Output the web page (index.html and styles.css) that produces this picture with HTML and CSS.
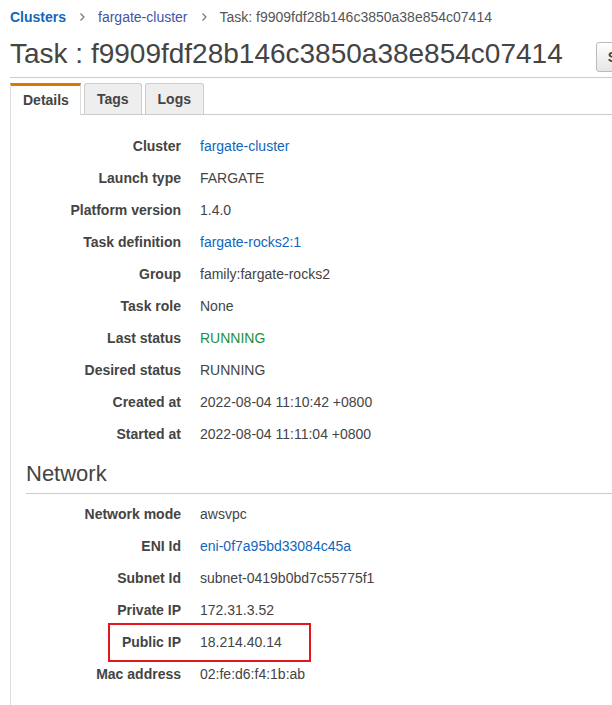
FILE: index.html
```html
<!DOCTYPE html>
<html lang="en">
<head>
<meta charset="utf-8">
<title>Task f9909fdf28b146c3850a38e854c07414</title>
<link rel="stylesheet" href="styles.css">
</head>
<body>
<div class="page">
  <nav class="breadcrumb">
    <a class="crumb crumb-root" href="#">Clusters</a>
    <svg class="sep" width="7" height="10" viewBox="0 0 7 10"><polyline points="1.5,1.5 5,5 1.5,8.5" fill="none" stroke="#777" stroke-width="1.2"/></svg>
    <a class="crumb crumb-link" href="#">fargate-cluster</a>
    <svg class="sep" width="7" height="10" viewBox="0 0 7 10"><polyline points="1.5,1.5 5,5 1.5,8.5" fill="none" stroke="#777" stroke-width="1.2"/></svg>
    <span class="crumb crumb-current">Task: f9909fdf28b146c3850a38e854c07414</span>
  </nav>

  <header class="title-bar">
    <h1 class="title">Task : f9909fdf28b146c3850a38e854c07414</h1>
    <button class="action-btn">Stop</button>
  </header>

  <div class="tabs">
    <div class="tab tab-active">Details</div>
    <div class="tab">Tags</div>
    <div class="tab">Logs</div>
  </div>

  <section class="panel">
    <dl class="props">
      <div class="row"><dt>Cluster</dt><dd><a href="#" class="link">fargate-cluster</a></dd></div>
      <div class="row"><dt>Launch type</dt><dd>FARGATE</dd></div>
      <div class="row"><dt>Platform version</dt><dd>1.4.0</dd></div>
      <div class="row"><dt>Task definition</dt><dd><a href="#" class="link">fargate-rocks2:1</a></dd></div>
      <div class="row"><dt>Group</dt><dd>family:fargate-rocks2</dd></div>
      <div class="row"><dt>Task role</dt><dd>None</dd></div>
      <div class="row"><dt>Last status</dt><dd class="status-running">RUNNING</dd></div>
      <div class="row"><dt>Desired status</dt><dd>RUNNING</dd></div>
      <div class="row"><dt>Created at</dt><dd>2022-08-04 11:10:42 +0800</dd></div>
      <div class="row"><dt>Started at</dt><dd>2022-08-04 11:11:04 +0800</dd></div>
    </dl>

    <h2 class="section-title">Network</h2>

    <dl class="props props-network">
      <div class="row"><dt>Network mode</dt><dd>awsvpc</dd></div>
      <div class="row"><dt>ENI Id</dt><dd><a href="#" class="link">eni-0f7a95bd33084c45a</a></dd></div>
      <div class="row"><dt>Subnet Id</dt><dd>subnet-0419b0bd7c55775f1</dd></div>
      <div class="row"><dt>Private IP</dt><dd>172.31.3.52</dd></div>
      <div class="row row-highlight"><dt>Public IP</dt><dd>18.214.40.14</dd><span class="highlight-box"></span></div>
      <div class="row"><dt>Mac address</dt><dd>02:fe:d6:f4:1b:ab</dd></div>
    </dl>
  </section>
</div>
</body>
</html>
```

FILE: styles.css
```css
html, body {
  margin: 0;
  padding: 0;
  overflow: hidden;
  background: #fff;
}

body {
  font-family: "Liberation Sans", Arial, sans-serif;
  font-size: 14px;
  color: #444;
}

.page {
  padding-left: 10px;
  min-height: 705px;
  display: flex;
  flex-direction: column;
}

/* breadcrumb */
.breadcrumb {
  display: flex;
  align-items: center;
  padding-top: 7px;
  height: 20px;
  line-height: 20px;
  white-space: nowrap;
}

.crumb {
  text-decoration: none;
}

.crumb-root {
  color: #1166bb;
  font-weight: bold;
}

.crumb-link {
  color: #3f54a8;
}

.crumb-current {
  color: #555;
}

.sep {
  margin: 0 12px 0 13px;
  display: block;
}

/* title */
.title-bar {
  display: flex;
  align-items: flex-start;
  margin-top: 10px;
  padding-bottom: 5px;
  border-bottom: 1px solid #ccc;
  white-space: nowrap;
}

.title {
  margin: 0;
  font-size: 28px;
  font-weight: normal;
  line-height: 34px;
  color: #444;
  flex-shrink: 0;
}

.action-btn {
  flex-shrink: 0;
  margin-left: 33px;
  margin-top: 5px;
  height: 30px;
  padding: 0 11px;
  border: 1px solid #bbb;
  border-radius: 3px;
  background: linear-gradient(#fefefe, #e6e6e6);
  font-family: "Liberation Sans", Arial, sans-serif;
  font-size: 14px;
  font-weight: bold;
  color: #444;
}

/* tabs */
.tabs {
  display: flex;
  gap: 3px;
  margin-top: 5px;
  border-bottom: 1px solid #ccc;
}

.tab {
  height: 30px;
  line-height: 30px;
  padding: 0 12px;
  background: #eee;
  border: 1px solid #ccc;
  border-bottom: none;
  border-radius: 3px 3px 0 0;
  font-weight: bold;
  color: #444;
}

.tab-active {
  background: #fff;
  border-top: 3px solid #dd7700;
  border-left: 1px solid #ddd;
  border-right: 1px solid #ddd;
  height: 28px;
  line-height: 28px;
  margin-bottom: -1px;
  padding: 0 11px 1px 12px;
  border-radius: 0;
}

/* panel */
.panel {
  flex: 1;
  border-left: 1px solid #ddd;
  padding-top: 15px;
}

.props {
  margin: 0;
}

.row {
  display: grid;
  grid-template-columns: 170px 1fr;
  column-gap: 19px;
  height: 32px;
  line-height: 32px;
  white-space: nowrap;
}

.row dt {
  text-align: right;
  font-weight: bold;
  color: #444;
}

.row dd {
  margin: 0;
  color: #444;
}

.link {
  color: #1166bb;
  text-decoration: none;
}

.status-running.status-running {
  color: #1d8f3a;
}

.section-title {
  margin: 11px 0 0 15px;
  padding-bottom: 6px;
  border-bottom: 1px solid #ccc;
  font-size: 22px;
  font-weight: normal;
  line-height: 26px;
  color: #444;
}

.props-network {
  padding-top: 4px;
}

.row-highlight {
  position: relative;
}

.highlight-box {
  position: absolute;
  left: 97px;
  top: -3px;
  width: 199px;
  height: 35px;
  border: 2px solid #e3161f;
}
```
